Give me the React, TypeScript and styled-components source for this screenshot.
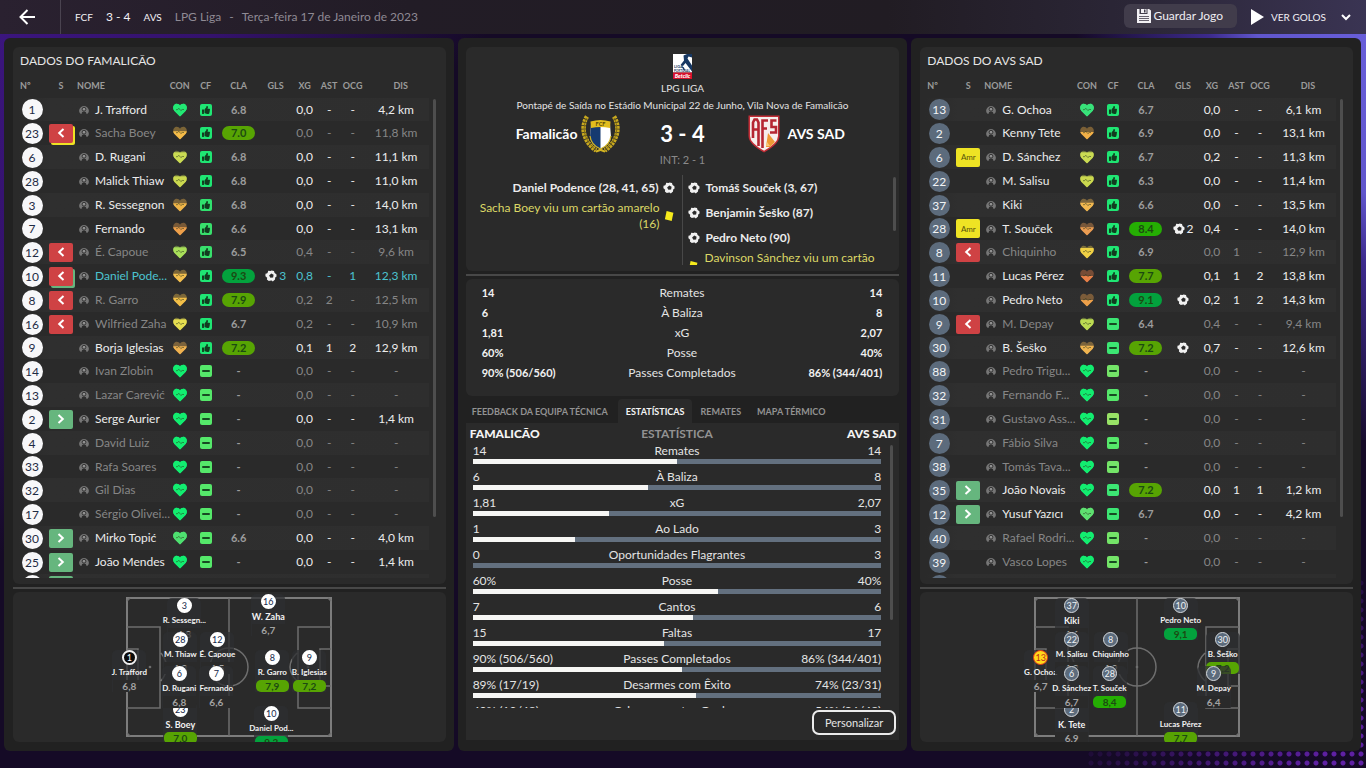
import React from 'react';
import styled, { createGlobalStyle, css } from 'styled-components';
import { FaThumbsUp } from 'react-icons/fa';

const Global = createGlobalStyle`
  * { box-sizing: border-box; }
  body { margin: 0; background: #150a26; }
  button { font: inherit; color: inherit; background: none; border: 0; padding: 0; cursor: pointer; }
  h2, h3, p, ul { margin: 0; padding: 0; font-weight: 400; list-style: none; }
`;

const Page = styled.div`
  position: relative;
  isolation: isolate;
  height: 100vh;
  min-height: 640px;
  display: flex;
  flex-direction: column;
  color: #e4e4e4;
  font-family: Lato, "Noto Sans", sans-serif;
  font-size: 12px;
  line-height: 16px;
  background:
    linear-gradient(to bottom left, #6a60dc 0, #6056cc 110px, #3c2a8c 150px, rgba(30, 12, 62, 0) 260px) top right / 300px 440px no-repeat,
    linear-gradient(to bottom right, #3c1680 0, #34126c 180px, rgba(30, 12, 60, 0) 380px) top left / 560px 600px no-repeat,
    #150a26;
  &::after {
    content: "";
    position: absolute;
    right: 0;
    bottom: 0;
    width: 280px;
    height: 190px;
    z-index: -1;
    background: radial-gradient(circle at 4px 4px, #5f20a4 0, #5f20a4 2px, rgba(95, 32, 164, 0) 3px) bottom right / 9px 9px;
    mask-image: linear-gradient(to top left, #000 0, #000 10%, transparent 60%);
  }
`;

/* ---------- top bar ---------- */

const TopBar = styled.header`
  flex: none;
  height: 34px;
  display: flex;
  align-items: center;
  padding-right: 15px;
  background: linear-gradient(to right, #2a2130 0, #221c26 30%, #211c23 65%, #2c2739 85%, #3a3453 100%);
`;

const BackButton = styled.button`
  width: 61px;
  height: 34px;
  padding-left: 19px;
  border-right: 1px solid #4a4350;
  display: flex;
  align-items: center;
`;

const Crumbs = styled.div`
  flex: 1;
  display: flex;
  align-items: center;
  padding-left: 14px;
  gap: 13px;
  color: #8f8a94;
`;

const CrumbTeam = styled.span`
  color: #f2f0f4;
  font-size: 10px;
`;

const CrumbScore = styled.span`
  color: #f2f0f4;
  font-size: 12px;
`;

const CrumbMeta = styled.span`
  display: flex;
  gap: 8px;
  font-size: 12px;
`;

const SaveButton = styled.button`
  height: 24px;
  padding: 0 14px 0 13px;
  display: flex;
  align-items: center;
  gap: 3px;
  border-radius: 6px;
  background: #413c4b;
  color: #efedf2;
  font-size: 12px;
  margin-bottom: 2px;
`;

const GoalsButton = styled.button`
  display: flex;
  align-items: center;
  gap: 7px;
  margin-left: 14px;
  font-size: 10px;
  color: #f2f0f4;
  & > svg:last-child { margin-left: 8px; }
`;

/* ---------- panels ---------- */

const Columns = styled.main`
  flex: 1;
  min-height: 0;
  display: grid;
  grid-template-columns: repeat(3, minmax(0, 1fr));
  gap: 4px;
  padding: 4px 5px 17px 4px;
`;

const Panel = styled.section`
  min-height: 0;
  display: flex;
  flex-direction: column;
  padding: 9px 8px;
  border-radius: 6px;
  background: #212121;
`;

const SidePanel = styled(Panel)`
  padding-left: 9px;
`;

const Card = styled.div<{ $grow?: boolean }>`
  ${p => (p.$grow ? css`flex: 1; min-height: 0;` : css`flex: none;`)}
  display: flex;
  flex-direction: column;
  border-radius: 6px;
  background: #2a2a2a;
`;

const Divider = styled.div`
  flex: none;
  height: 2px;
  margin: 3px 0;
  background: #484848;
`;

const ScrollThumb = styled.div<{ $h: string; $top?: number }>`
  flex: none;
  width: 3px;
  height: ${p => p.$h};
  margin-top: ${p => p.$top ?? 0}px;
  border-radius: 2px;
  background: #4e4e4e;
`;

/* ---------- squad table ---------- */

const SquadCard = styled(Card)`
  padding: 7px 10px 6px 5px;
`;

const SquadTitle = styled.h2`
  padding-left: 2px;
  margin-bottom: 6px;
  font-size: 12px;
  line-height: 14px;
  color: #e6e6e6;
`;

const SquadScroll = styled.div`
  flex: 1;
  min-height: 0;
  overflow: hidden;
  display: flex;
  align-items: flex-start;
  gap: 4px;
`;

const TableBox = styled.div`
  flex: 1;
  min-width: 0;
`;

const Table = styled.table`
  width: 100%;
  table-layout: fixed;
  border-collapse: collapse;
  line-height: 20px;
  th {
    height: 24px;
    padding: 0;
    font-size: 9px;
    font-weight: 700;
    color: #9b9b9b;
    white-space: nowrap;
  }
  th:first-child { text-align: left; padding-left: 2px; }
  th:nth-child(3) { text-align: left; padding-left: 1px; }
  th:last-child { padding-left: 9px; }
  td { padding: 0; text-align: center; white-space: nowrap; }
`;

const Row = styled.tr<{ $tone: Tone }>`
  height: 24px;
  color: ${p => ({ on: '#ececec', off: '#868686', hi: '#4cc3d0' })[p.$tone]};
  &:nth-child(5n + 1) { height: 23px; }
  &:nth-child(odd) { background: linear-gradient(to right, #2a2a2a, #2f2f2f 8%, #2e2e2e); }
`;

const Shirt = styled.span<{ $away?: boolean }>`
  display: block;
  width: 21px;
  height: 21px;
  margin: 0 auto;
  border-radius: 50%;
  line-height: 21px;
  background: ${p => (p.$away ? '#5c6b7c' : '#f7f7f9')};
  color: ${p => (p.$away ? '#f2f4f6' : '#1d2a44')};
`;

const Status = styled.span<{ $kind: string; $under?: string }>`
  display: flex;
  align-items: center;
  justify-content: center;
  width: 24px;
  height: 19px;
  margin: 0 auto;
  border-radius: 2px;
  font-size: 8px;
  color: ${p => (p.$kind === 'amr' ? '#55510c' : '#fff')};
  background: ${p => ({ out: '#cf4244', in: '#66b67e', amr: '#eee324' })[p.$kind]};
  ${p => p.$under && css`box-shadow: 2px 2px 0 ${p.$under};`}
`;

const NameCell = styled.td`
  && { text-align: left; padding-left: 3px; }
  svg { margin-right: 6px; vertical-align: -1px; }
`;

const Rating = styled.span<{ $bg?: string }>`
  display: block;
  width: 33px;
  height: 14px;
  margin: 0 auto;
  border-radius: 7px;
  line-height: 14px;
  font-size: 11px;
  font-weight: 700;
  color: ${p => (p.$bg ? '#1c4a12' : '#9c9c9c')};
  background: ${p => p.$bg ?? 'transparent'};
`;

const Mood = styled.span<{ $bg: string }>`
  display: flex;
  align-items: center;
  justify-content: center;
  width: 12px;
  height: 12px;
  margin: 0 auto;
  border-radius: 2px;
  color: #123c20;
  background: ${p => p.$bg};
`;

const Minus = styled.i`
  width: 8px;
  height: 2px;
  border-radius: 1px;
  background: #174a22;
`;

const Goals = styled.span`
  display: flex;
  align-items: center;
  justify-content: center;
  gap: 2px;
`;

/* ---------- pitch ---------- */

const PitchCard = styled(Card)`
  height: 150px;
  padding-top: 5px;
  align-items: center;
  overflow: hidden;
`;

const Pitch = styled.div`
  position: relative;
  width: 206px;
  height: 140px;
`;

const Node = styled.div<{ $top?: boolean }>`
  position: absolute;
  width: 34px;
  margin-left: -17px;
  margin-top: -8px;
  display: flex;
  flex-direction: column;
  align-items: center;
  border-radius: 5px 5px 0 0;
  background: rgba(46, 47, 49, 0.75);
  z-index: ${p => (p.$top ? 1 : 0)};
`;

const NodeShirt = styled.span<{ $look: string }>`
  flex: none;
  width: 15px;
  height: 15px;
  border-radius: 50%;
  font-size: 9px;
  line-height: 11px;
  display: flex;
  justify-content: center;
  border: 2px solid;
  ${p => ({
    home: css`background: #fff; color: #14284a; border-color: #fff;`,
    away: css`background: #5c6b7c; color: #eef1f4; border: 1px solid #d6dade; line-height: 13px;`,
    gkHome: css`background: #0b0b0b; color: #fff; border-color: #f0f0f0;`,
    gkAway: css`background: #ffd91a; color: #c0281c; border: 1px solid #e2331c; line-height: 13px;`,
  })[p.$look]}
`;

const NodeName = styled.span<{ $tight?: boolean }>`
  height: 15px;
  line-height: 15px;
  white-space: nowrap;
  font-size: ${p => (p.$tight ? 8 : 9)}px;
  font-weight: 700;
  color: #f2f2f2;
`;

const NodeRating = styled.span<{ $bg?: string }>`
  width: 33px;
  height: 12px;
  line-height: 12px;
  border-radius: ${p => (p.$bg ? 5 : 0)}px;
  text-align: center;
  font-size: 10px;
  font-weight: 700;
  color: ${p => (p.$bg ? '#1c4a12' : '#a2a2a2')};
  background: ${p => p.$bg ?? '#2a2a2a'};
`;

/* ---------- centre: match header ---------- */

const MatchCard = styled(Card)`
  height: 224px;
  padding: 7px 3px 6px;
  align-items: center;
`;

const League = styled.p`
  margin-top: 1px;
  font-size: 10px;
  line-height: 16px;
`;

const Venue = styled.p`
  font-size: 10px;
  line-height: 18px;
  white-space: nowrap;
`;

const Score = styled.div`
  align-self: stretch;
  height: 40px;
  display: grid;
  grid-template-columns: 1fr 96px 1fr;
  align-items: center;
  font-weight: 700;
  text-align: center;
`;

const Team = styled.div<{ $home?: boolean }>`
  display: flex;
  align-items: center;
  gap: ${p => (p.$home ? 4 : 7)}px;
  justify-content: ${p => (p.$home ? 'flex-end' : 'flex-start')};
  padding: ${p => (p.$home ? '0 14px 0 0' : '0 0 0 18px')};
  font-size: 14px;
  color: #fff;
`;

const Result = styled.span`
  font-size: 22px;
  line-height: 28px;
  color: #fff;
`;

const HalfTime = styled.p`
  font-size: 11px;
  line-height: 12px;
  color: #8a8a8a;
`;

const Events = styled.div`
  align-self: stretch;
  flex: 1;
  min-height: 0;
  margin-top: 9px;
  display: grid;
  grid-template-columns: minmax(0, 1fr) minmax(0, 1fr);
  position: relative;
  overflow: hidden;
`;

const EventList = styled.ul<{ $home?: boolean }>`
  display: flex;
  flex-direction: column;
  padding: ${p => (p.$home ? '0 7px 0 9px' : '0 9px 0 5px')};
  ${p => !p.$home && css`border-left: 1px solid #484848;`}
`;

const Event = styled.li<{ $home?: boolean; $card?: boolean }>`
  display: flex;
  flex: none;
  flex-direction: ${p => (p.$home ? 'row-reverse' : 'row')};
  text-align: ${p => (p.$home ? 'right' : 'left')};
  align-items: center;
  gap: 5px;
  min-height: ${p => (p.$card ? 32 : 25)}px;
  font-size: 12px;
  line-height: 16px;
  font-weight: ${p => (p.$card ? 400 : 700)};
  color: ${p => (p.$card ? '#dcd866' : '#ececec')};
  svg { flex: none; }
`;

const EventsThumb = styled.div`
  position: absolute;
  right: 0;
  top: 2px;
  width: 3px;
  height: 54px;
  border-radius: 2px;
  background: #4e4e4e;
`;

/* ---------- centre: statistics ---------- */

const Summary = styled(Card)`
  height: 117px;
  padding: 4px 17px 0 16px;
`;

const SummaryRow = styled.div`
  display: grid;
  grid-template-columns: 1fr auto 1fr;
  line-height: 20px;
  font-size: 12px;
  b { font-size: 11px; color: #f2f2f2; }
  b:last-child { text-align: right; }
`;

const Tabs = styled.div`
  flex: none;
  display: flex;
  margin-top: 3px;
  height: 24px;
`;

const Tab = styled.button<{ $active?: boolean }>`
  height: 24px;
  padding: 2px 8px 0;
  border-radius: 4px 4px 0 0;
  font-size: 9px;
  font-weight: 700;
  white-space: nowrap;
  color: ${p => (p.$active ? '#f4f4f4' : '#929292')};
  background: ${p => (p.$active ? '#2a2a2a' : 'transparent')};
  &:first-child { padding: 2px 10px 0 6px; }
`;

const StatsPanel = styled.div`
  flex: 1;
  min-height: 0;
  display: flex;
  flex-direction: column;
  padding: 0 3px 5px 4px;
  margin-bottom: 2px;
  background: #2a2a2a;
`;

const StatsHead = styled.div`
  display: grid;
  grid-template-columns: 1fr auto 1fr;
  font-size: 12px;
  line-height: 20px;
  height: 22px;
  padding-top: 1px;
  font-weight: 700;
  color: #f4f4f4;
  span { color: #929292; padding-right: 12px; }
  b:last-child { text-align: right; }
`;

const StatsScroll = styled.div`
  flex: 1;
  min-height: 0;
  overflow: hidden;
  display: flex;
  gap: 9px;
  padding: 0 3px;
`;

const StatsList = styled.ul`
  flex: 1;
`;

const Stat = styled.li`
  height: 26px;
`;

const StatText = styled.div`
  display: grid;
  grid-template-columns: 1fr auto 1fr;
  line-height: 12px;
  padding-bottom: 2px;
  span:last-child { text-align: right; }
`;

const Bar = styled.div`
  height: 5px;
  background: #63707f;
  div { height: 5px; background: #f6f6f4; }
`;

const CustomButton = styled.button`
  flex: none;
  align-self: flex-end;
  height: 25px;
  margin-top: 2px;
  padding: 0 11px;
  border: 2px solid #ececec;
  border-radius: 7px;
  font-size: 11px;
  line-height: 20px;
`;

/* ---------- icons ---------- */

const Person = () => (
  <svg width="10" height="10" viewBox="0 0 10 10" aria-hidden="true">
    <path d="M1.200 8.600A4.700 4.700 0 1 1 8.800 8.600L7.600 9Q7.400 6.600 5 6.600T2.400 9z" fill="#767676" />
    <circle cx="5" cy="4.200" r="1.900" fill="#909090" stroke="#2a2a2a" strokeWidth=".9" />
  </svg>
);

const HEART = 'M7 13 1.200 7.200C-.4 5.300-.1 2.100 2 .8 3.900-.3 6 .5 7 2.200 8 .5 10.100-.3 12 .8c2.100 1.300 2.400 4.500.8 6.400z';

const Heart = ({ color, level = 1 }: { color: string; level?: number }) => {
  const cut = (1 - level) * 12;
  return (
    <svg width="14" height="14" viewBox="0 0 14 13" style={{ display: 'block', margin: '0 auto' }} aria-hidden="true">
      <path d={HEART} fill={color} opacity={level < 1 ? 0.4 : 1} />
      <svg x="0" y={cut} width="14" height={13 - cut} viewBox={`0 ${cut} 14 ${13 - cut}`}>
        <path d={HEART} fill={color} />
      </svg>
      <path d="M3 6.200h1.500l1.300-1.400 2 2.200L9.300 6H11" fill="none" stroke="#2d3a1e" strokeOpacity=".7" strokeWidth=".8" />
    </svg>
  );
};

const Ball = () => (
  <svg width="12" height="12" viewBox="0 0 12 12" aria-hidden="true">
    <circle cx="6" cy="6" r="4.600" fill="#9a9a9a" />
    <path
      d="M3.200.8 5.500 1 6.600.6 9 .9l.5 2 1.900 1.300.2 2.400-1.400.7L10 9.600l-2.200 1.800-1.400-1.200-2.600.9-1.900-1.500L2.300 7.500.4 6.200.5 3.800l2-.6z"
      fill="#f1f1f1"
    />
    <path d="m6.300 3.400 2.300 1.400-.5 2.600-2.700.3-1.300-2.200z" fill="#2a2a2a" />
  </svg>
);

const YellowCard = () => (
  <svg width="11" height="12" viewBox="0 0 11 12" aria-hidden="true">
    <path d="m2.600 1 6.800 1.700-1.700 8.300L.9 9.300z" fill="#f6ea1c" />
  </svg>
);

const Chevron = ({ dir }: { dir: 'left' | 'right' }) => (
  <svg width="8" height="10" viewBox="0 0 8 10" aria-hidden="true">
    <path d={dir === 'left' ? 'M6.500 1 2.200 5l4.300 4' : 'M1.500 1l4.300 4-4.300 4'} fill="none" stroke="#fff" strokeWidth="2" />
  </svg>
);

const LeagueLogo = () => (
  <svg width="19" height="25" viewBox="0 0 19 25" role="img" aria-label="Liga Portugal Betclic">
    <rect width="19" height="18.500" fill="#fff" />
    <path d="M10.500 1.500 14 0h5v3.500L15.500 2.500l-1 2 4.500 7v6L12.500 9l-2.500 3L7.500 11 11 6.500z" fill="#173863" />
    <path d="m8.500 12 2.500 1.500 1.500 3.500-2-1z" fill="#173863" />
    <text x="1" y="14" fontSize="4" fontWeight="700" fill="#173863">LIGA</text>
    <text x="1" y="17.800" fontSize="3" fontWeight="700" fill="#173863">PORTUGAL</text>
    <rect y="18.500" width="19" height="6.500" fill="#d8102c" />
    <text x="9.500" y="23.500" fontSize="5.500" fontWeight="900" fontStyle="italic" textAnchor="middle" fill="#fff">Betclic</text>
  </svg>
);

const FamalicaoCrest = () => (
  <svg width="39" height="39" viewBox="0 0 39 39" role="img" aria-label="Famalicão">
    <g fill="none" stroke="#c9a91f" strokeWidth="4.500" strokeDasharray="2.600 .8">
      <path d="M6 1.500C-.5 12 2 26 15 35.500" />
      <path d="M33 1.500c6.500 10.500 4 24.500-9 34" />
    </g>
    <g fill="none" stroke="#7d6a14" strokeWidth="1">
      <path d="M6 3C.5 12.500 3 25.500 15 35" />
      <path d="M33 3c5.500 9.500 3 22.500-9 32" />
    </g>
    <path d="m14 36 5.500-2.500L25 36l-1.500 1.500-4-1.500-4 1.500z" fill="#d3b422" />
    <path d="M10 9q9.500 3 19 0l1 13q-1 8-10.500 12Q10 30 9 22z" fill="#fff" />
    <path d="M10 9q5 2 9.500 2v23Q10 30 9 22z" fill="#163a70" />
    <path d="M9.500 6.500q10-3 20 0L29 13q-9.500-2-19 0z" fill="#e2bd1d" />
    <text x="19.500" y="10.500" fontSize="5.500" fontWeight="700" textAnchor="middle" fill="#5a4a0a">FCF</text>
    <path d="M9 21q1 9 10.500 13Q29 30 30 21" fill="none" stroke="#d3b422" strokeWidth="1.200" />
  </svg>
);

const AvsCrest = () => (
  <svg width="32" height="38" viewBox="0 0 32 38" role="img" aria-label="AVS">
    <path d="M.5.500h31V21q0 8-15.500 16.500Q.500 29 .5 21z" fill="#c22d36" />
    <path d="M2 2h28v19q0 7-14 14.700Q2 28 2 21z" fill="#f6eeec" />
    <g fill="none" stroke="#b52632" strokeWidth="2.600">
      <path d="M5 23V7.500l1.500-3H9L10.500 7.500V31M5.500 14.500h4.500" />
      <path d="M14.500 33V5.500h5.500M14.500 13.500H19" />
      <path d="M28.500 5.500h-5V12H28v5.500h-6" />
    </g>
    <path d="m20 18 7 9-5 5h-4z" fill="#ee9a35" />
    <path d="m19 27 3 4h-4z" fill="#f6c579" />
  </svg>
);

const PitchLines = () => (
  <svg width="206" height="140" viewBox="0 0 206 140" fill="none" stroke="#6e6e6e" strokeWidth="1.500" aria-hidden="true">
    <rect x="1" y="1" width="204" height="138" strokeWidth="2" stroke="#7c7c7c" />
    <path d="M103 1v138M1 30h33v81H1M205 30h-33v81h33M1 52h11v37H1M205 52h-11v37h11M35 56q11 14 0 28M171 56q-14 14 0 28M1 4l3-3M202 1l3 3M205 136l-3 3M4 139l-3-3" />
    <circle cx="103" cy="70" r="19" />
    <circle cx="24" cy="70" r=".6" />
    <circle cx="103" cy="70" r=".6" />
    <circle cx="182" cy="70" r=".6" />
  </svg>
);

/* ---------- data ---------- */

type Tone = 'on' | 'off' | 'hi';

interface Player {
  no: number;
  name: string;
  tone: Tone;
  status?: 'out' | 'in' | 'amr';
  under?: string;
  heart?: string;
  level?: number;
  mood: string;
  up?: boolean;
  cla?: string;
  goals?: number;
  xg?: string;
  ast?: string;
  ocg?: string;
  dis?: string;
}

const UP = '#1fe673';
const MID = '#55e86a';
const DULL = '#74e468';

const home: Player[] = [
  { no: 1, name: 'J. Trafford', tone: 'on', heart: '#22e874', mood: UP, up: true, cla: '6.8', dis: '4,2 km' },
  { no: 23, name: 'Sacha Boey', tone: 'off', status: 'out', under: '#eee324', heart: '#f5bb48', level: 0.6, mood: UP, up: true, cla: '7.0', dis: '11,8 km' },
  { no: 6, name: 'D. Rugani', tone: 'on', heart: '#cbdc53', level: 0.85, mood: UP, up: true, cla: '6.8', dis: '11,1 km' },
  { no: 28, name: 'Malick Thiaw', tone: 'on', heart: '#cbd94f', level: 0.85, mood: UP, up: true, cla: '6.8', dis: '11,0 km' },
  { no: 3, name: 'R. Sessegnon', tone: 'on', heart: '#f0b548', level: 0.6, mood: '#30e26e', up: true, cla: '6.8', dis: '14,0 km' },
  { no: 7, name: 'Fernando', tone: 'on', heart: '#ee9f4a', level: 0.6, mood: '#38e06c', up: true, cla: '6.6', dis: '13,1 km' },
  { no: 12, name: 'É. Capoue', tone: 'off', status: 'out', heart: '#a9e05a', level: 0.85, mood: '#38e06c', up: true, cla: '6.5', xg: '0,4', dis: '9,6 km' },
  { no: 10, name: 'Daniel Pode...', tone: 'hi', status: 'out', under: '#66b67e', heart: '#f3bf4e', level: 0.65, mood: UP, up: true, cla: '9.3', goals: 3, xg: '0,8', ocg: '1', dis: '12,3 km' },
  { no: 8, name: 'R. Garro', tone: 'off', status: 'out', heart: '#f3bf48', level: 0.65, mood: UP, up: true, cla: '7.9', xg: '0,2', ast: '2', dis: '12,5 km' },
  { no: 16, name: 'Wilfried Zaha', tone: 'off', status: 'out', heart: '#e6de50', level: 0.85, mood: UP, up: true, cla: '6.7', xg: '0,2', dis: '10,9 km' },
  { no: 9, name: 'Borja Iglesias', tone: 'on', heart: '#f0b250', level: 0.6, mood: UP, up: true, cla: '7.2', xg: '0,1', ast: '1', ocg: '2', dis: '12,9 km' },
  { no: 14, name: 'Ivan Zlobin', tone: 'off', mood: MID },
  { no: 13, name: 'Lazar Carević', tone: 'off', mood: MID },
  { no: 2, name: 'Serge Aurier', tone: 'on', status: 'in', mood: MID, dis: '1,4 km' },
  { no: 4, name: 'David Luiz', tone: 'off', mood: MID },
  { no: 33, name: 'Rafa Soares', tone: 'off', mood: MID },
  { no: 32, name: 'Gil Dias', tone: 'off', mood: MID },
  { no: 17, name: 'Sérgio Olivei...', tone: 'off', mood: MID },
  { no: 30, name: 'Mirko Topić', tone: 'on', status: 'in', heart: '#4ee070', mood: MID, cla: '6.6', dis: '4,0 km' },
  { no: 25, name: 'João Mendes', tone: 'on', status: 'in', mood: MID, dis: '1,4 km' },
  { no: 20, name: 'Gustavo Sá', tone: 'on', status: 'in', mood: MID, dis: '1,4 km' },
];

const away: Player[] = [
  { no: 13, name: 'G. Ochoa', tone: 'on', heart: '#38e27a', mood: UP, up: true, cla: '6.7', dis: '6,1 km' },
  { no: 2, name: 'Kenny Tete', tone: 'on', heart: '#f2b048', level: 0.55, mood: UP, up: true, cla: '6.9', dis: '13,1 km' },
  { no: 6, name: 'D. Sánchez', tone: 'on', status: 'amr', heart: '#cbdc53', level: 0.85, mood: UP, up: true, cla: '6.7', xg: '0,2', dis: '11,3 km' },
  { no: 22, name: 'M. Salisu', tone: 'on', heart: '#cbd94f', level: 0.85, mood: UP, up: true, cla: '6.3', dis: '11,4 km' },
  { no: 37, name: 'Kiki', tone: 'on', heart: '#f2b850', level: 0.65, mood: UP, up: true, cla: '6.6', dis: '13,5 km' },
  { no: 28, name: 'T. Souček', tone: 'on', status: 'amr', heart: '#ea9c52', level: 0.6, mood: UP, up: true, cla: '8.4', goals: 2, xg: '0,4', dis: '14,0 km' },
  { no: 8, name: 'Chiquinho', tone: 'off', status: 'out', heart: '#f0d045', level: 0.8, mood: UP, up: true, cla: '6.9', ast: '1', dis: '12,9 km' },
  { no: 11, name: 'Lucas Pérez', tone: 'on', heart: '#e88048', level: 0.45, mood: UP, up: true, cla: '7.7', xg: '0,1', ast: '1', ocg: '2', dis: '13,8 km' },
  { no: 10, name: 'Pedro Neto', tone: 'on', heart: '#eda04a', level: 0.45, mood: UP, up: true, cla: '9.1', goals: 1, xg: '0,2', ast: '1', ocg: '2', dis: '14,3 km' },
  { no: 9, name: 'M. Depay', tone: 'off', status: 'out', heart: '#bddc52', level: 0.85, mood: '#3ce673', cla: '6.4', xg: '0,4', dis: '9,4 km' },
  { no: 30, name: 'B. Šeško', tone: 'on', heart: '#f0b450', level: 0.65, mood: '#3ce673', cla: '7.2', goals: 1, xg: '0,7', dis: '12,6 km' },
  { no: 88, name: 'Pedro Trigu...', tone: 'off', mood: DULL },
  { no: 32, name: 'Fernando F...', tone: 'off', mood: MID },
  { no: 31, name: 'Gustavo Ass...', tone: 'off', mood: '#98e266' },
  { no: 7, name: 'Fábio Silva', tone: 'off', mood: MID },
  { no: 38, name: 'Tomás Tava...', tone: 'off', mood: DULL },
  { no: 35, name: 'João Novais', tone: 'on', status: 'in', mood: '#3ce673', cla: '7.2', ast: '1', ocg: '1', dis: '1,2 km' },
  { no: 12, name: 'Yusuf Yazıcı', tone: 'on', status: 'in', heart: '#5ee070', mood: '#3ce673', cla: '6.7', dis: '4,2 km' },
  { no: 40, name: 'Rafael Rodri...', tone: 'off', mood: DULL },
  { no: 39, name: 'Vasco Lopes', tone: 'off', mood: DULL },
  { no: 5, name: 'Devenish', tone: 'off', mood: DULL },
];

interface Spot {
  no: number;
  name: string;
  x: number;
  y: number;
  rating: string;
  gk?: boolean;
  tight?: boolean;
  top?: boolean;
}

const homeSpots: Spot[] = [
  { no: 1, name: 'J. Trafford', x: 3, y: 61, rating: '6,8', gk: true, tight: true },
  { no: 3, name: 'R. Sessegn...', x: 58, y: 9, rating: '6,8', tight: true },
  { no: 28, name: 'M. Thiaw', x: 54, y: 43, rating: '6,8', tight: true },
  { no: 12, name: 'É. Capoue', x: 91, y: 43, rating: '6,5', tight: true },
  { no: 23, name: 'S. Boey', x: 54, y: 113, rating: '7,0' },
  { no: 6, name: 'D. Rugani', x: 53, y: 77, rating: '6,8', tight: true, top: true },
  { no: 7, name: 'Fernando', x: 90, y: 77, rating: '6,6', tight: true, top: true },
  { no: 16, name: 'W. Zaha', x: 142, y: 5, rating: '6,7' },
  { no: 8, name: 'R. Garro', x: 146, y: 61, rating: '7,9', tight: true },
  { no: 9, name: 'B. Iglesias', x: 183, y: 61, rating: '7,2', tight: true },
  { no: 10, name: 'Daniel Pod...', x: 145, y: 117, rating: '9,3', tight: true },
];

const awaySpots: Spot[] = [
  { no: 13, name: 'G. Ochoa', x: 7, y: 61, rating: '6,7', gk: true, tight: true },
  { no: 37, name: 'Kiki', x: 38, y: 9, rating: '6,6' },
  { no: 22, name: 'M. Salisu', x: 38, y: 43, rating: '6,3', tight: true },
  { no: 8, name: 'Chiquinho', x: 77, y: 43, rating: '6,9', tight: true },
  { no: 2, name: 'K. Tete', x: 38, y: 113, rating: '6,9' },
  { no: 6, name: 'D. Sánchez', x: 38, y: 77, rating: '6,7', tight: true, top: true },
  { no: 28, name: 'T. Souček', x: 76, y: 77, rating: '8,4', tight: true, top: true },
  { no: 10, name: 'Pedro Neto', x: 147, y: 9, rating: '9,1', tight: true },
  { no: 30, name: 'B. Šeško', x: 189, y: 43, rating: '7,2', tight: true },
  { no: 9, name: 'M. Depay', x: 180, y: 77, rating: '6,4', tight: true, top: true },
  { no: 11, name: 'Lucas Pérez', x: 147, y: 113, rating: '7,7', tight: true },
];

const ratingColor = (value?: string) => {
  const n = parseFloat((value ?? '').replace(',', '.'));
  if (!(n >= 7)) return undefined;
  if (n >= 9) return '#03a23d';
  return n >= 8 ? '#25ae03' : '#57a403';
};

const summary = [
  ['14', 'Remates', '14'],
  ['6', 'À Baliza', '8'],
  ['1,81', 'xG', '2,07'],
  ['60%', 'Posse', '40%'],
  ['90% (506/560)', 'Passes Completados', '86% (344/401)'],
];

const stats = [
  ['14', 'Remates', '14'],
  ['6', 'À Baliza', '8'],
  ['1,81', 'xG', '2,07'],
  ['1', 'Ao Lado', '3'],
  ['0', 'Oportunidades Flagrantes', '3'],
  ['60%', 'Posse', '40%'],
  ['7', 'Cantos', '6'],
  ['15', 'Faltas', '17'],
  ['90% (506/560)', 'Passes Completados', '86% (344/401)'],
  ['89% (17/19)', 'Desarmes com Êxito', '74% (23/31)'],
  ['40% (19/48)', 'Cabeceamentos Ganhos', '54% (26/48)'],
];

// The bars compare whole numbers only, so 1,81 against 2,07 is drawn as 1 against 2.
const share = (a: string, b: string) => {
  const [x, y] = [a, b].map(v => parseInt(v, 10));
  return `${(x / (x + y)) * 100}%`;
};

/* ---------- composed parts ---------- */

// A width of 0 marks the column that takes the space left over.
const COLS = [28, 30, 0, 26, 26, 40, 34, 24, 25, 22, 65];
const HEADS = ['Nº', 'S', 'NOME', 'CON', 'CF', 'CLA', 'GLS', 'XG', 'AST', 'OCG', 'DIS'];

const Squad = ({ title, players, away: isAway }: { title: string; players: Player[]; away?: boolean }) => (
  <SquadCard $grow>
    <SquadTitle>{title}</SquadTitle>
    <SquadScroll>
      <TableBox>
        <Table>
          <colgroup>
            {COLS.map((w, i) => <col key={i} width={w || undefined} />)}
          </colgroup>
          <thead>
            <tr>{HEADS.map(h => <th key={h} scope="col">{h}</th>)}</tr>
          </thead>
          <tbody>
            {players.map(p => (
              <Row key={p.no} $tone={p.tone}>
                <td><Shirt $away={isAway}>{p.no}</Shirt></td>
                <td>
                  {p.status && (
                    <Status $kind={p.status} $under={p.under}>
                      {p.status === 'amr' ? 'Amr' : <Chevron dir={p.status === 'out' ? 'left' : 'right'} />}
                    </Status>
                  )}
                </td>
                <NameCell><Person />{p.name}</NameCell>
                <td><Heart color={p.heart ?? '#12ed70'} level={p.level} /></td>
                <td><Mood $bg={p.mood}>{p.up ? <FaThumbsUp size={8} /> : <Minus />}</Mood></td>
                <td><Rating $bg={ratingColor(p.cla)}>{p.cla ?? '-'}</Rating></td>
                <td>{p.goals && <Goals><Ball />{p.goals > 1 && p.goals}</Goals>}</td>
                <td>{p.xg ?? '0,0'}</td>
                <td>{p.ast ?? '-'}</td>
                <td>{p.ocg ?? '-'}</td>
                <td>{p.dis ?? '-'}</td>
              </Row>
            ))}
          </tbody>
        </Table>
      </TableBox>
      <ScrollThumb $h="calc(100% - 86px)" $top={25} />
    </SquadScroll>
  </SquadCard>
);

const Formation = ({ spots, side }: { spots: Spot[]; side: 'home' | 'away' }) => (
  <PitchCard>
    <Pitch>
      <PitchLines />
      {spots.map(s => (
        <Node key={s.no} $top={s.top} style={{ left: s.x, top: s.y }}>
          <NodeShirt $look={s.gk ? (side === 'home' ? 'gkHome' : 'gkAway') : side}>{s.no}</NodeShirt>
          <NodeName $tight={s.tight}>{s.name}</NodeName>
          <NodeRating $bg={ratingColor(s.rating)}>{s.rating}</NodeRating>
        </Node>
      ))}
    </Pitch>
  </PitchCard>
);

export default function App() {
  return (
    <Page>
      <Global />
      <TopBar>
        <BackButton aria-label="Voltar">
          <svg width="17" height="16" viewBox="0 0 17 16" fill="none" stroke="#fff" strokeWidth="2" aria-hidden="true">
            <path d="M8.500 1 1.500 8l7 7M1.500 8H16" />
          </svg>
        </BackButton>
        <Crumbs>
          <CrumbTeam>FCF</CrumbTeam>
          <CrumbScore>3 - 4</CrumbScore>
          <CrumbTeam>AVS</CrumbTeam>
          <CrumbMeta><span>LPG Liga</span><span>-</span><span>Terça-feira 17 de Janeiro de 2023</span></CrumbMeta>
        </Crumbs>
        <SaveButton>
          <svg width="14" height="14" viewBox="0 0 14 14" aria-hidden="true">
            <path d="M0 0h2.500v5h8V0H12l2 1.500V14H0z" fill="#f2f0f4" />
            <path d="M4 0h5.500v4H4z" fill="#f2f0f4" />
            <path d="M7 .5h1.500v3H7z" fill="#413c4b" />
            <path d="M2 7.500h10M2 9.500h10M2 11.500h10" stroke="#413c4b" strokeWidth=".8" />
          </svg>
          Guardar Jogo
        </SaveButton>
        <GoalsButton>
          <svg width="13" height="16" viewBox="0 0 13 16" aria-hidden="true"><path d="M0 0 13 8 0 16z" fill="#fff" /></svg>
          VER GOLOS
          <svg width="10" height="7" viewBox="0 0 10 7" fill="none" stroke="#fff" strokeWidth="2" aria-hidden="true"><path d="m1 1 4 4 4-4" /></svg>
        </GoalsButton>
      </TopBar>
      <Columns>
        <SidePanel>
          <Squad title="DADOS DO FAMALICÃO" players={home} />
          <Divider />
          <Formation spots={homeSpots} side="home" />
        </SidePanel>
        <Panel>
          <MatchCard>
            <LeagueLogo />
            <League>LPG LIGA</League>
            <Venue>Pontapé de Saída no Estádio Municipal 22 de Junho, Vila Nova de Famalicão</Venue>
            <Score>
              <Team $home>Famalicão<FamalicaoCrest /></Team>
              <Result>3 - 4</Result>
              <Team><AvsCrest />AVS SAD</Team>
            </Score>
            <HalfTime>INT: 2 - 1</HalfTime>
            <Events>
              <EventList $home>
                <Event $home><Ball />Daniel Podence (28, 41, 65)</Event>
                <Event $home $card><YellowCard />Sacha Boey viu um cartão amarelo (16)</Event>
              </EventList>
              <EventList>
                <Event><Ball />Tomáš Souček (3, 67)</Event>
                <Event><Ball />Benjamin Šeško (87)</Event>
                <Event><Ball />Pedro Neto (90)</Event>
                <Event $card><YellowCard />Davinson Sánchez viu um cartão amarelo (90+2)</Event>
              </EventList>
              <EventsThumb />
            </Events>
          </MatchCard>
          <Divider />
          <Summary>
            {summary.map(([a, label, b]) => (
              <SummaryRow key={label}><b>{a}</b><span>{label}</span><b>{b}</b></SummaryRow>
            ))}
          </Summary>
          <Tabs role="tablist">
            <Tab role="tab">FEEDBACK DA EQUIPA TÉCNICA</Tab>
            <Tab role="tab" $active aria-selected>ESTATÍSTICAS</Tab>
            <Tab role="tab">REMATES</Tab>
            <Tab role="tab">MAPA TÉRMICO</Tab>
          </Tabs>
          <StatsPanel>
            <StatsHead><b>FAMALICÃO</b><span>ESTATÍSTICA</span><b>AVS SAD</b></StatsHead>
            <StatsScroll>
              <StatsList>
                {stats.map(([a, label, b]) => (
                  <Stat key={label}>
                    <StatText><span>{a}</span><span>{label}</span><span>{b}</span></StatText>
                    <Bar><div style={{ width: share(a, b) }} /></Bar>
                  </Stat>
                ))}
              </StatsList>
              <ScrollThumb $h="calc(100% - 88px)" />
            </StatsScroll>
            <CustomButton>Personalizar</CustomButton>
          </StatsPanel>
        </Panel>
        <SidePanel>
          <Squad title="DADOS DO AVS SAD" players={away} away />
          <Divider />
          <Formation spots={awaySpots} side="away" />
        </SidePanel>
      </Columns>
    </Page>
  );
}
